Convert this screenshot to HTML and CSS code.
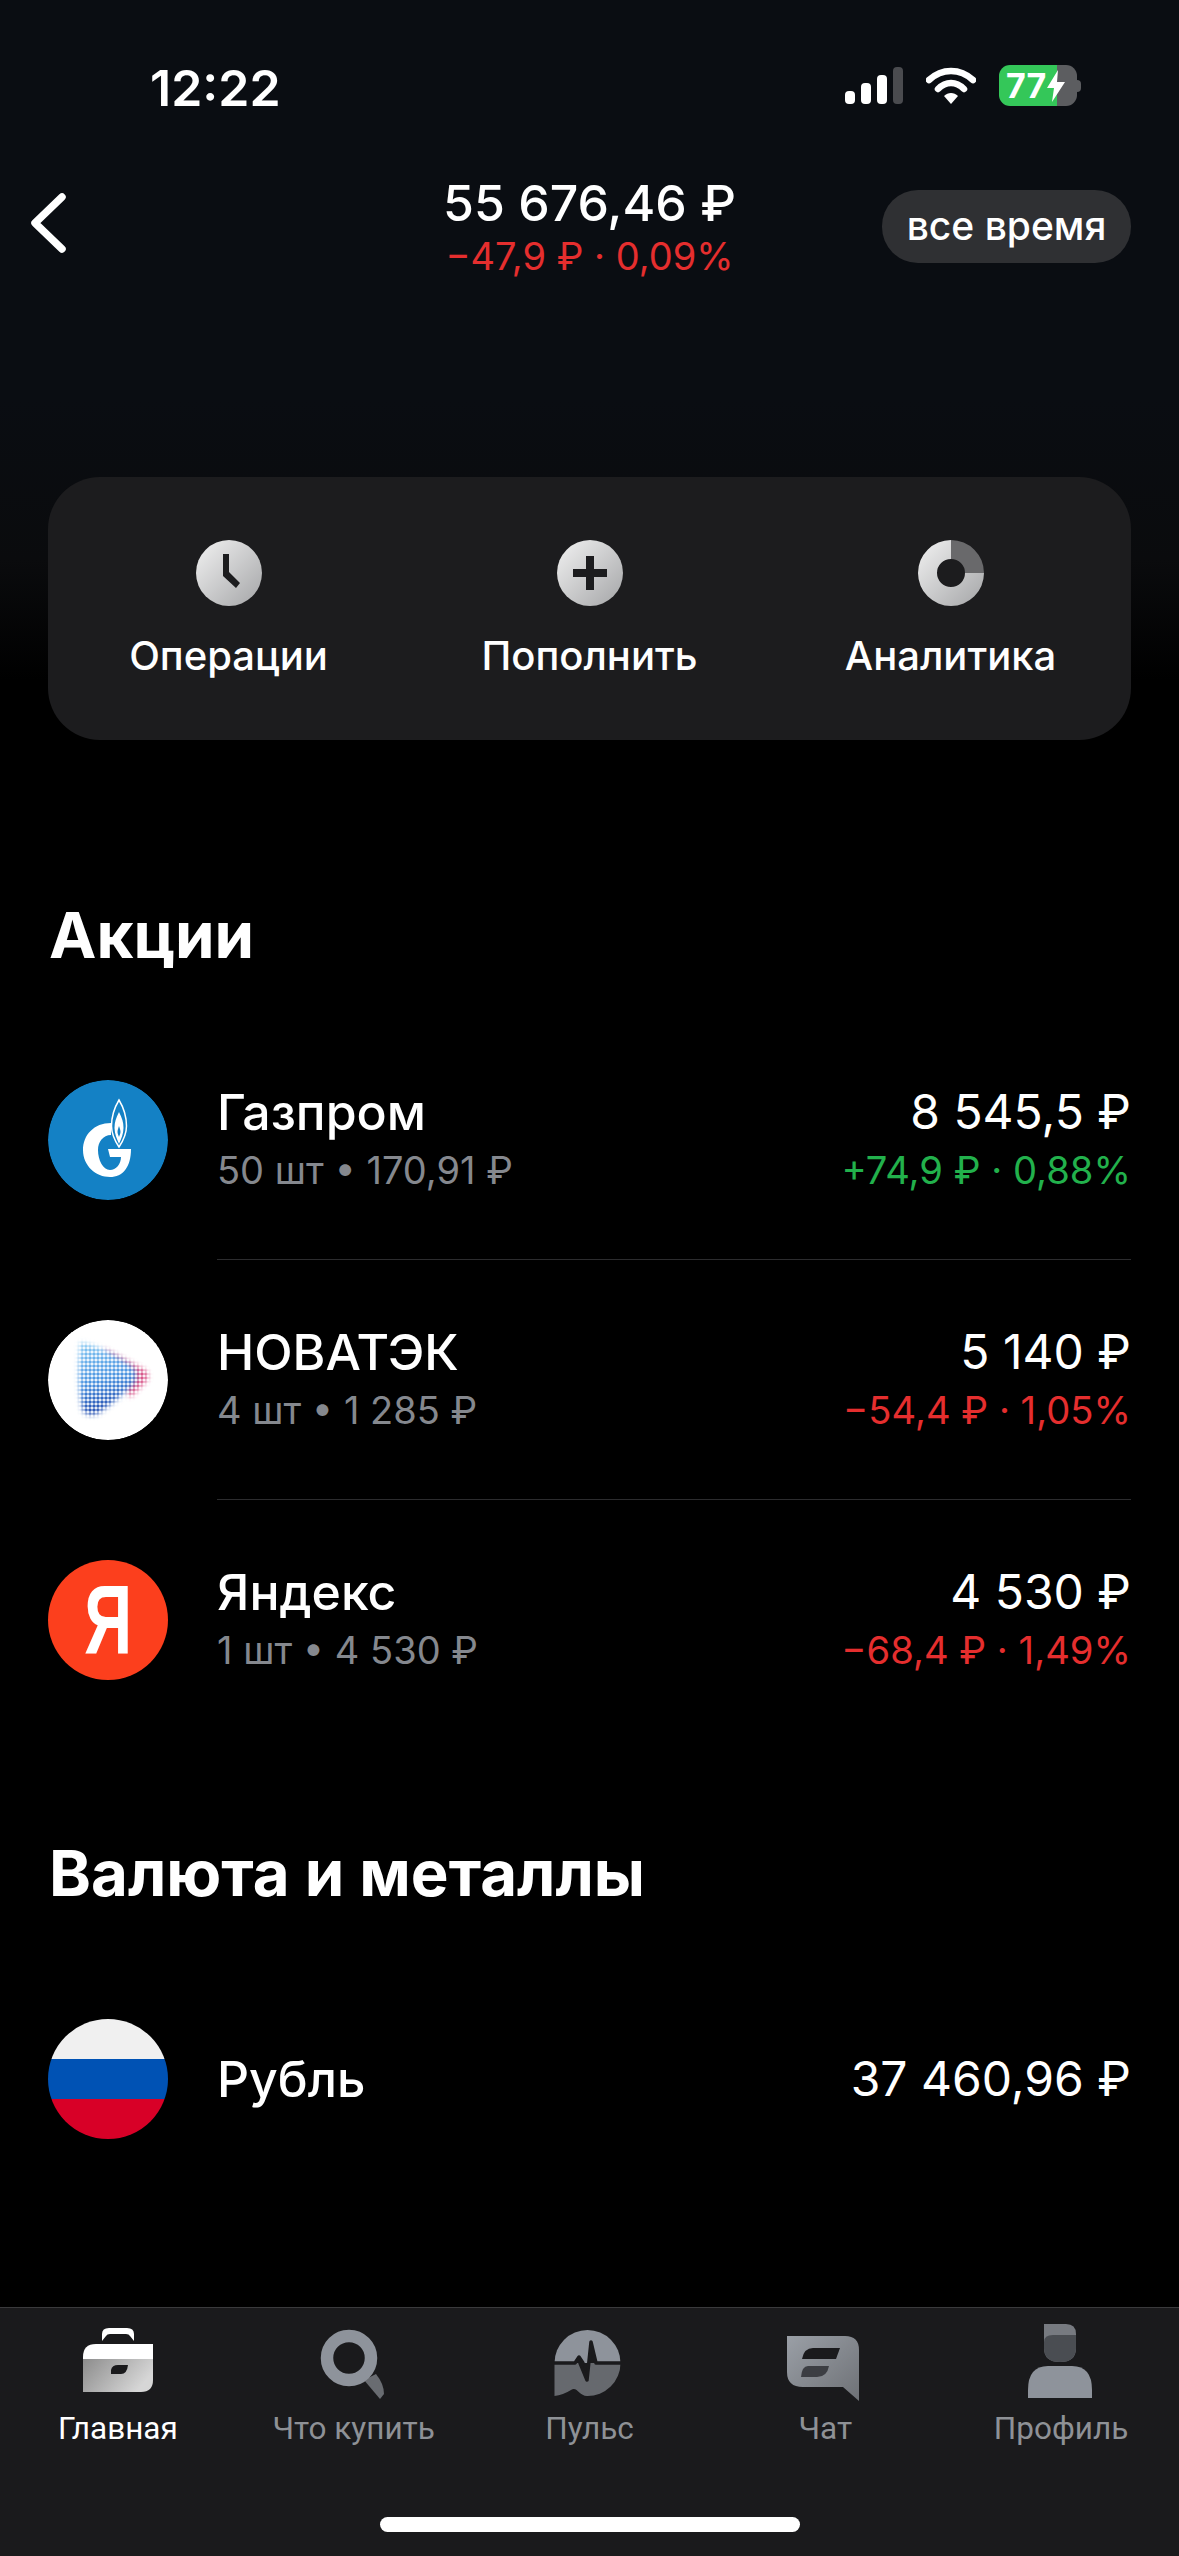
FILE: index.html
```html
<!DOCTYPE html>
<html lang="ru">
<head>
  <meta charset="UTF-8">
  <title>Портфель</title>
  <link rel="stylesheet" href="styles.css">
</head>
<body>
  <div class="screen">
    <div class="status-bar">
      <span class="time">12:22</span>
      <div class="status-icons">
        <svg class="signal" width="58" height="37" viewBox="0 0 58 37">
          <rect x="0" y="24" width="10" height="13" rx="4" fill="#fff"/>
          <rect x="16" y="16" width="10" height="21" rx="4" fill="#fff"/>
          <rect x="32" y="8" width="10" height="29" rx="4" fill="#fff"/>
          <rect x="48" y="0" width="10" height="37" rx="4" fill="#4a4b4f"/>
        </svg>
        <svg class="wifi" width="50" height="37" viewBox="0 0 50 37">
          <path d="M3 13C16 1 34 1 47 13" fill="none" stroke="#fff" stroke-width="6.5" stroke-linecap="round"/>
          <path d="M12 22C20 14 30 14 38 22" fill="none" stroke="#fff" stroke-width="6.5" stroke-linecap="round"/>
          <path d="M18 29C22 25 28 25 32 29L25 37Z" fill="#fff"/>
        </svg>
        <div class="battery">
          <div class="battery-body">
            <span class="battery-text">77</span>
            <svg class="bolt" width="18" height="32" viewBox="0 0 18 32">
              <path d="M11 0L0 18H7L5 32L18 12H10Z" fill="#fff"/>
            </svg>
          </div>
          <div class="battery-nub"></div>
        </div>
      </div>
    </div>

    <div class="header">
      <div class="header-left">
        <svg class="back" width="36" height="60" viewBox="0 0 36 60">
          <path d="M32 4L5 30L32 56" fill="none" stroke="#fff" stroke-width="7.5" stroke-linecap="round" stroke-linejoin="round"/>
        </svg>
      </div>
      <div class="total">
        <div class="total-value">55 676,46 ₽</div>
        <div class="total-change red">−47,9 ₽ · 0,09%</div>
      </div>
      <div class="header-right">
        <div class="period">все время</div>
      </div>
    </div>

    <div class="actions">
      <div class="action">
        <svg width="66" height="66" viewBox="0 0 66 66">
          <defs>
            <linearGradient id="metal" x1="0" y1="0" x2="1" y2="1">
              <stop offset="0" stop-color="#f2f2f2"/>
              <stop offset="1" stop-color="#a4a5a7"/>
            </linearGradient>
          </defs>
          <circle cx="33" cy="33" r="33" fill="url(#metal)"/>
          <path d="M27 14H33V32L44 43L40 48L27 36Z" fill="#1c1c1e"/>
        </svg>
        <span>Операции</span>
      </div>
      <div class="action">
        <svg width="66" height="66" viewBox="0 0 66 66">
          <circle cx="33" cy="33" r="33" fill="url(#metal)"/>
          <path d="M29 16H37V29H50V37H37V50H29V37H16V29H29Z" fill="#1c1c1e"/>
        </svg>
        <span>Пополнить</span>
      </div>
      <div class="action">
        <svg width="66" height="66" viewBox="0 0 66 66">
          <path d="M33 0A33 33 0 1 0 66 33H47A14 14 0 1 1 33 19Z" fill="url(#metal)"/>
          <path d="M33 0A33 33 0 0 1 66 33H47A14 14 0 0 0 33 19Z" fill="#69696b"/>
        </svg>
        <span>Аналитика</span>
      </div>
    </div>

    <h2 class="section-title shares-title">Акции</h2>

    <div class="list">
      <div class="row">
        <div class="avatar">
          <svg width="120" height="120" viewBox="0 0 120 120">
            <circle cx="60" cy="60" r="60" fill="#1481c5"/>
            <path d="M63 43C46 43 35 55 35 70C35 86 48 97 62 97C75 97 83 87 83 69H60L62 77H73C73 84 68 90 62 90C55 90 50 80 50 70C50 62 55 55 63 55Z" fill="#fff"/>
            <path d="M71 20C65 30 63.5 38 63.5 46C63.5 55 67 61 71 67C75 61 78.5 55 78.5 46C78.5 38 77 30 71 20Z" fill="#1481c5" stroke="#fff" stroke-width="1.5"/>
            <path d="M71 32C68 38 66.5 42 66.5 48C66.5 54 69 59 71 64C73 59 75.5 54 75.5 48C75.5 42 74 38 71 32Z" fill="#fff"/>
            <path d="M71 46C70 49 69.5 50 69.5 52C69.5 54 70.5 55 71 57C71.5 55 72.5 54 72.5 52C72.5 50 72 49 71 46Z" fill="#1481c5"/>
          </svg>
        </div>
        <div class="row-main">
          <div class="name">Газпром</div>
          <div class="sub">50 шт • 170,91 ₽</div>
        </div>
        <div class="row-side">
          <div class="price">8 545,5 ₽</div>
          <div class="change green">+74,9 ₽ · 0,88%</div>
        </div>
      </div>
      <div class="row">
        <div class="avatar">
          <svg width="120" height="120" viewBox="0 0 120 120">
            <defs>
              <pattern id="halftone" width="4" height="4" patternUnits="userSpaceOnUse">
                <path d="M0 0H4V4H0ZM2 .2A1.8 1.8 0 1 0 2 3.8A1.8 1.8 0 1 0 2 .2Z" fill="#fff" fill-rule="evenodd"/>
              </pattern>
              <linearGradient id="nvtk" x1="0.1" y1="0" x2="0.3" y2="1">
                <stop offset="0" stop-color="#86c8f2"/>
                <stop offset="0.55" stop-color="#4a93e0"/>
                <stop offset="1" stop-color="#2048ac"/>
              </linearGradient>
              <filter id="soft" x="-20%" y="-20%" width="140%" height="140%">
                <feGaussianBlur stdDeviation="2.5"/>
              </filter>
            </defs>
            <circle cx="60" cy="60" r="60" fill="#fff"/>
            <path d="M55 28L98 50Q104 58 96 64L82 78L70 50Z" fill="#cf2a6c" opacity="0.8" filter="url(#soft)"/>
            <path d="M32 22Q60 28 84 46Q92 54 86 64Q70 80 50 94Q38 98 34 90Q28 60 32 22Z" fill="url(#nvtk)" filter="url(#soft)"/>
            <rect x="20" y="12" width="92" height="92" fill="url(#halftone)"/>
          </svg>
        </div>
        <div class="row-main">
          <div class="name">НОВАТЭК</div>
          <div class="sub">4 шт • 1 285 ₽</div>
        </div>
        <div class="row-side">
          <div class="price">5 140 ₽</div>
          <div class="change red">−54,4 ₽ · 1,05%</div>
        </div>
      </div>
      <div class="row">
        <div class="avatar avatar-yandex"><span>Я</span></div>
        <div class="row-main">
          <div class="name">Яндекс</div>
          <div class="sub">1 шт • 4 530 ₽</div>
        </div>
        <div class="row-side">
          <div class="price">4 530 ₽</div>
          <div class="change red">−68,4 ₽ · 1,49%</div>
        </div>
      </div>
    </div>

    <h2 class="section-title currency-title">Валюта и металлы</h2>

    <div class="list">
      <div class="row">
        <div class="avatar avatar-flag"></div>
        <div class="row-main">
          <div class="name">Рубль</div>
        </div>
        <div class="row-side">
          <div class="price">37 460,96 ₽</div>
        </div>
      </div>
    </div>

    <div class="tabbar">
      <div class="tabs">
        <div class="tab tab-active">
          <svg width="80" height="80" viewBox="0 0 80 80">
            <defs>
              <linearGradient id="caseLow" x1="0" y1="0" x2="1" y2="0.4">
                <stop offset="0" stop-color="#8c8c8c"/>
                <stop offset="1" stop-color="#d6d6d6"/>
              </linearGradient>
            </defs>
            <path d="M24 17V10Q24 4 31 4H49Q56 4 56 10V17L52 12Q51 10 48 10H32Q29 10 28 12Z" fill="#fff"/>
            <path d="M18 20H75V35H5V33Q5 20 18 20Z" fill="#fff"/>
            <path d="M5 35H75V56Q75 68 63 68H5Z" fill="url(#caseLow)"/>
            <path d="M33 46Q34 41 40 41H50Q49 50 43 50H33Z" fill="#1a1a1c"/>
          </svg>
          <span>Главная</span>
        </div>
        <div class="tab">
          <svg width="80" height="80" viewBox="0 0 80 80">
            <path d="M50 56L62 50Q70 60 70 70L66 75Z" fill="#696c71"/>
            <circle cx="35" cy="34" r="22" fill="none" stroke="#8e939b" stroke-width="12.5"/>
          </svg>
          <span>Что купить</span>
        </div>
        <div class="tab">
          <svg width="80" height="80" viewBox="0 0 80 80">
            <path d="M5.5 39A33 33 0 0 1 71.5 39Z" fill="#8e939b"/>
            <path d="M5.5 39H71.5A33 33 0 0 1 38 72C30 72 28 62 22 66Q14 71 5.5 72Z" fill="#66696e"/>
            <path d="M5 39H26L30 33L34 39H31L38 56L42 18L47 39H72" fill="#1a1a1c" stroke="#1a1a1c" stroke-width="3.5" stroke-linejoin="round"/>
          </svg>
          <span>Пульс</span>
        </div>
        <div class="tab">
          <svg width="80" height="80" viewBox="0 0 80 80">
            <defs>
              <linearGradient id="chatFill" x1="0" y1="0" x2="1" y2="1">
                <stop offset="0" stop-color="#9a9fa6"/>
                <stop offset="1" stop-color="#6e7176"/>
              </linearGradient>
            </defs>
            <path d="M2 12H60Q74 12 74 26V77L58 63H18Q2 63 2 48Z" fill="url(#chatFill)"/>
            <path d="M28 24H55L51 35H17Q19 24 28 24Z" fill="#1a1a1c"/>
            <path d="M23 42H44Q42 53 32 53H16Q17 42 23 42Z" fill="#3c3e43"/>
          </svg>
          <span>Чат</span>
        </div>
        <div class="tab">
          <svg width="80" height="80" viewBox="0 0 80 80">
            <path d="M23 0H45Q55 0 55 10V24Q55 38 39 38Q23 38 23 24Z" fill="#777a80"/>
            <path d="M23 18Q23 11 32 11H55V24Q55 38 39 38Q23 38 23 24Z" fill="#4a4d52"/>
            <path d="M7 74V66Q7 42 27 42H51Q71 42 71 66V74Z" fill="#8e939b"/>
          </svg>
          <span>Профиль</span>
        </div>
      </div>
      <div class="home-indicator"></div>
    </div>
  </div>
</body>
</html>
```

FILE: styles.css
```css
* {
  box-sizing: border-box;
}

html, body {
  margin: 0;
  padding: 0;
  background: #000;
}

.screen {
  width: 1179px;
  height: 2556px;
  display: flex;
  flex-direction: column;
  overflow: hidden;
  font-family: Inter, "Liberation Sans", sans-serif;
  color: #fff;
  background: linear-gradient(#0a0d12 0, #0a0d12 400px, #0a0b0d 560px, #000 680px);
}

.red {
  color: #e52e2e;
}

.green {
  color: #22b14c;
}

/* status bar */
.status-bar {
  height: 170px;
  flex: none;
  padding: 66px 98px 0 150px;
  display: flex;
  justify-content: space-between;
  align-items: flex-start;
}

.time {
  font-size: 50px;
  font-weight: 600;
  line-height: 44px;
}

.status-icons {
  display: flex;
  align-items: flex-start;
  gap: 23px;
  margin-top: 1px;
}

.battery {
  display: flex;
  align-items: center;
  margin-top: -2px;
}

.battery-body {
  width: 78px;
  height: 41px;
  border-radius: 11px;
  background: linear-gradient(90deg, #34c759 0, #34c759 58px, #5c5d60 58px);
  display: flex;
  align-items: center;
  padding-left: 7px;
  gap: 1px;
}

.battery-text {
  font-size: 34px;
  font-weight: 700;
  line-height: 41px;
}

.battery-nub {
  width: 4px;
  height: 12px;
  background: #5c5d60;
  border-radius: 0 4px 4px 0;
}

/* header */
.header {
  flex: none;
  height: 100px;
  padding: 0 48px 0 30px;
  display: grid;
  grid-template-columns: 1fr auto 1fr;
  align-items: center;
}

.header-left {
  display: flex;
  margin-top: -2px;
}

.header-right {
  display: flex;
  justify-content: flex-end;
}

.total {
  text-align: center;
  margin-top: 2px;
  margin-left: 18px;
}

.total-value {
  font-size: 50px;
  font-weight: 500;
  line-height: 62px;
}

.total-change {
  font-size: 38px;
  line-height: 44px;
}

.period {
  width: 249px;
  height: 73px;
  border-radius: 36px;
  background: #2f3033;
  font-size: 39px;
  font-weight: 500;
  line-height: 71px;
  text-align: center;
  margin-top: 4px;
}

/* action card */
.actions {
  flex: none;
  margin: 207px 48px 0;
  height: 263px;
  border-radius: 52px;
  background: #1c1c1e;
  display: grid;
  grid-template-columns: repeat(3, 1fr);
  padding: 63px 0 0;
}

.action {
  display: flex;
  flex-direction: column;
  align-items: center;
  font-size: 40px;
  font-weight: 500;
}

.action span {
  margin-top: 26px;
  line-height: 48px;
}

/* lists */
.section-title {
  margin: 0;
  padding-left: 49px;
  font-size: 63.5px;
  font-weight: 700;
  line-height: 76px;
  flex: none;
}

.shares-title {
  margin-top: 157px;
}

.currency-title {
  margin-top: 155px;
}

.list {
  flex: none;
  padding: 0 48px;
}

.shares-title + .list {
  margin-top: 107px;
}

.currency-title + .list {
  margin-top: 108px;
}

.row {
  height: 120px;
  display: flex;
  align-items: center;
  margin-bottom: 120px;
  position: relative;
}

.row:last-child {
  margin-bottom: 0;
}

.row:not(:last-child)::after {
  content: "";
  position: absolute;
  left: 169px;
  right: 0;
  bottom: -60px;
  height: 1px;
  background: #2c2c2e;
}

.avatar {
  width: 120px;
  height: 120px;
  border-radius: 50%;
  overflow: hidden;
  flex: none;
  display: flex;
  align-items: center;
  justify-content: center;
}

.avatar-yandex {
  background: #fc3f1d;
}

.avatar-yandex span {
  font-size: 98px;
  font-weight: 700;
  font-family: "Liberation Sans", sans-serif;
  transform: scaleX(0.68);
}

.avatar-flag {
  background: linear-gradient(#f0f0f0 0, #f0f0f0 33.3%, #0052b4 33.3%, #0052b4 66.6%, #d80027 66.6%);
}

.row-main {
  flex: 1;
  margin-left: 49px;
}

.row-side {
  text-align: right;
}

.name,
.price {
  font-size: 50px;
  font-weight: 500;
  line-height: 60px;
}

.price {
  font-size: 48px;
  font-weight: 400;
}

.sub,
.change {
  font-size: 38px;
  line-height: 56px;
}

.change {
  font-size: 38.2px;
}

.sub {
  color: #85888e;
}

/* tab bar */
.tabbar {
  margin-top: auto;
  flex: none;
  height: 249px;
  background: #1a1a1c;
  border-top: 1px solid #3a3a3c;
  display: flex;
  flex-direction: column;
  align-items: center;
}

.tabs {
  width: 100%;
  display: grid;
  grid-template-columns: repeat(5, 1fr);
  padding-top: 16px;
}

.tab {
  display: flex;
  flex-direction: column;
  align-items: center;
  color: #8e9196;
  font-family: Roboto, Inter, sans-serif;
  font-size: 31.5px;
  line-height: 40px;
}

.tab span {
  margin-top: 5px;
}

.tab-active {
  color: #fff;
}

.home-indicator {
  width: 420px;
  height: 15px;
  border-radius: 8px;
  background: #fff;
  margin-top: 68px;
}
```
